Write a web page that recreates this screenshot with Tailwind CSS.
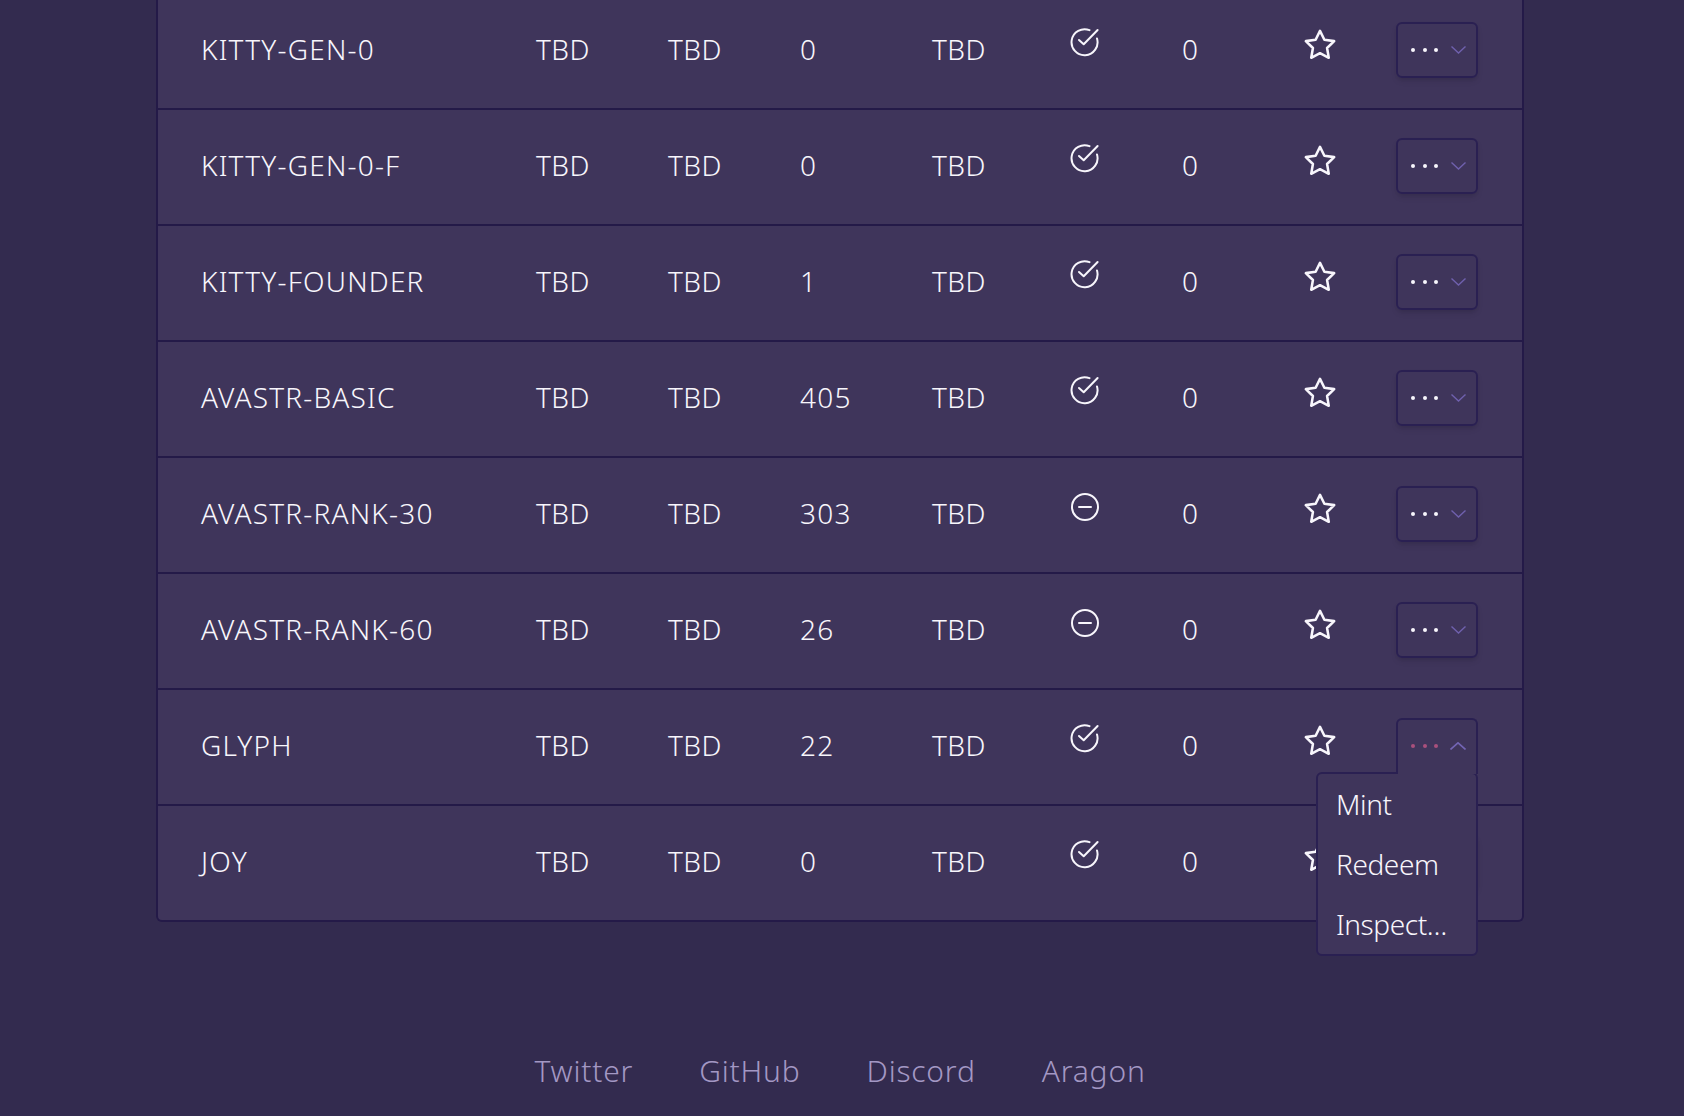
<!DOCTYPE html>
<html lang="en">
<head>
  <meta charset="UTF-8">
  <meta name="viewport" content="width=device-width, initial-scale=1.0">
  <title>Collections</title>
  <script src="https://cdn.jsdelivr.net/npm/@tailwindcss/browser@4"></script>
</head>
<body class="bg-[#332b4f] h-screen overflow-hidden font-['Noto_Sans',sans-serif] font-light text-[#f8f6fc]">
  <main class="w-[1368px] ml-[156px] -mt-[6px]">
    <div id="rows" class="border-2 border-t-0 border-[#241a48] rounded-b-md bg-[#3f355b]"></div>
  </main>

  <footer class="flex justify-center gap-[66px] mt-[129px] pr-[4px] text-[30px] leading-[40px] tracking-[0.8px] text-[#a398c4]">
    <a href="#">Twitter</a>
    <a href="#">GitHub</a>
    <a href="#">Discord</a>
    <a href="#">Aragon</a>
  </footer>

  <script>
    const rows = [
      ["KITTY-GEN-0", "0", true],
      ["KITTY-GEN-0-F", "0", true],
      ["KITTY-FOUNDER", "1", true],
      ["AVASTR-BASIC", "405", true],
      ["AVASTR-RANK-30", "303", false],
      ["AVASTR-RANK-60", "26", false],
      ["GLYPH", "22", true],
      ["JOY", "0", true],
    ];

    const checkIcon = `<svg class="w-8 h-8 ml-[6px] -mt-[16px]" viewBox="0 0 32 32" fill="none" stroke="currentColor" stroke-width="2" stroke-linecap="round" stroke-linejoin="round"><path d="M27 13.5A13 13 0 1 1 19.5 5.2"/><path d="M9 15l4.7 4.3L27.6 5"/></svg>`;
    const minusIcon = `<svg class="w-8 h-8 ml-[7px] -mt-[14px]" viewBox="0 0 32 32" fill="none" stroke="currentColor" stroke-width="2" stroke-linecap="round"><circle cx="14" cy="17" r="13"/><path d="M8 17h12"/></svg>`;
    const starIcon = `<svg class="w-[34px] h-[34px] ml-[1px] -mt-[8px]" viewBox="0 0 24 24" fill="none" stroke="currentColor" stroke-width="1.8" stroke-linejoin="round"><path d="M12 2l3.09 6.26L22 9.27l-5 4.87 1.18 6.88L12 17.77l-6.18 3.25L7 14.14 2 9.27l6.91-1.01z"/></svg>`;
    const dots = `<span class="flex gap-[7.5px]"><i class="w-1 h-1 rounded-full bg-current"></i><i class="w-1 h-1 rounded-full bg-current"></i><i class="w-1 h-1 rounded-full bg-current"></i></span>`;
    const chevronDown = `<svg class="w-[15px] h-2" viewBox="0 0 15 8" fill="none" stroke="#6f60ad" stroke-width="1.4"><path d="M0.5 0.5L7.5 7l7-6.5"/></svg>`;
    const chevronUp = `<svg class="w-4 h-2" viewBox="0 0 16 8" fill="none" stroke="#7365b4" stroke-width="1.6"><path d="M0.5 7.5L8 0.8l7.5 6.7"/></svg>`;

    const closedButton = `<button class="flex items-center justify-between w-[82px] h-[56px] mt-[2px] pl-[13px] pr-[10px] border-2 border-[#2a2052] rounded-md shadow-md shadow-black/10 text-[#f8f6fc]">${dots}${chevronDown}</button>`;
    const openButton = `<div class="relative w-[82px] h-[56px] mt-[2px]">
      <button class="relative z-20 flex items-center justify-between w-[82px] h-[56px] pl-[13px] pr-[10px] pb-[2px] bg-[#3f355b] border-2 border-b-0 border-[#2a2052] rounded-t-md text-[#a9507c]">${dots}${chevronUp}</button>
      <ul class="absolute z-10 top-[54px] right-0 w-[162px] h-[184px] pl-[18px] bg-[#3f355b] border-2 border-[#2a2052] rounded-md text-[#f8f6fc] text-[28px] leading-[60px] tracking-[-0.4px]">
        <li>Mint</li>
        <li>Redeem</li>
        <li>Inspect…</li>
      </ul>
    </div>`;

    document.getElementById("rows").innerHTML = rows.map(([name, count, ok], i) => `
      <div class="grid grid-cols-[335px_132px_132px_132px_132px_118px_120px_94px_82px] items-center pl-[43px] pb-[4px] text-[28px] tracking-[0.5px] ${i < rows.length - 1 ? "h-[116px] border-b-2 border-[#241a48]" : "h-[114px]"}">
        <span class="tracking-[1.2px]">${name}</span>
        <span>TBD</span>
        <span>TBD</span>
        <span class="tracking-[1.2px]">${count}</span>
        <span>TBD</span>
        ${ok ? checkIcon : minusIcon}
        <span>0</span>
        ${starIcon}
        ${name === "GLYPH" ? openButton : closedButton}
      </div>`).join("");
  </script>
</body>
</html>
